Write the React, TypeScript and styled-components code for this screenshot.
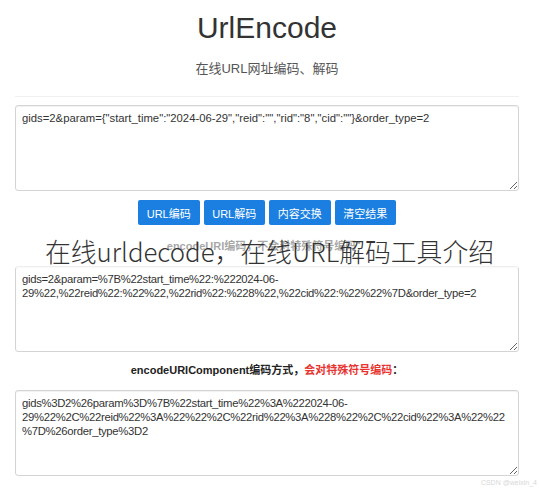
import React from "react";
import styled, { createGlobalStyle } from "styled-components";

const Global = createGlobalStyle`
  html, body { margin: 0; padding: 0; background: #fff; }
  body { font-family: "Liberation Sans", "Noto Sans CJK SC", sans-serif; color: #333; }
`;

const Page = styled.div`
  position: relative;
  width: 539px;
  height: 490px;
  box-sizing: border-box;
  padding: 11px 20px 0 15px;
  display: flex;
  flex-direction: column;
  overflow: hidden;
`;

const Title = styled.h1`
  margin: 0;
  font-size: 30px;
  line-height: 34px;
  font-weight: 400;
  text-align: center;
  color: #333;
`;

const Subtitle = styled.p`
  margin: 15px 0 0;
  font-size: 13px;
  line-height: 18px;
  text-align: center;
  color: #555;
`;

const Rule = styled.hr`
  margin: 18px 0 0;
  border: 0;
  border-top: 1px solid #f0f0f0;
`;

const Area = styled.textarea<{ $top: number; $tight?: boolean }>`
  display: block;
  margin: ${(p) => p.$top}px 0 0;
  width: 100%;
  height: 86px;
  box-sizing: border-box;
  border: 1px solid #d4d4d4;
  border-radius: 3px;
  box-shadow: inset 0 1px 1px rgba(0, 0, 0, 0.06);
  padding: 5px 12px 5px 6px;
  font-family: "Liberation Sans", "Noto Sans CJK SC", sans-serif;
  font-size: 11.3px;
  line-height: 14px;
  letter-spacing: ${(p) => (p.$tight ? "-0.3px" : "0")};
  color: #333;
  resize: vertical;
  outline: none;
  overflow: hidden;
`;

const Buttons = styled.div`
  margin-top: 9px;
  display: flex;
  justify-content: center;
  gap: 4px;
`;

const Btn = styled.button`
  width: 61.5px;
  height: 25px;
  padding: 0;
  border: 0;
  border-radius: 2px;
  background: #1a7fe0;
  color: #fff;
  font-family: "Liberation Sans", "Noto Sans CJK SC", sans-serif;
  font-size: 11px;
`;

const Label = styled.div<{ $top: number; $bottom: number }>`
  margin: ${(p) => p.$top}px 0 ${(p) => p.$bottom}px;
  height: 18px;
  line-height: 18px;
  font-size: 11px;
  font-weight: 700;
  text-align: center;
  color: #222;
`;

const Red = styled.span`
  color: #e8332f;
`;

const Overlay = styled.div`
  position: absolute;
  left: 0;
  right: 0;
  top: 234px;
  height: 34px;
  background: rgba(255, 255, 255, 0.6);
  display: flex;
  align-items: center;
  justify-content: center;
  font-family: "Noto Sans CJK SC", "Noto Sans", sans-serif;
  font-weight: 300;
  font-size: 25.8px;
  line-height: 34px;
  color: #333;
  white-space: nowrap;
`;

const Watermark = styled.div`
  position: absolute;
  right: 2px;
  bottom: 4px;
  font-size: 7px;
  color: #d8d8d8;
`;

const t1 = `gids=2&param={"start_time":"2024-06-29","reid":"","rid":"8","cid":""}&order_type=2`;
const t2 = `gids=2&param=%7B%22start_time%22:%222024-06-29%22,%22reid%22:%22%22,%22rid%22:%228%22,%22cid%22:%22%22%7D&order_type=2`;
const t3 = `gids%3D2%26param%3D%7B%22start_time%22%3A%222024-06-29%22%2C%22reid%22%3A%22%22%2C%22rid%22%3A%228%22%2C%22cid%22%3A%22%22%7D%26order_type%3D2`;

export default function App() {
  return (
    <>
      <Global />
      <Page>
        <Title>UrlEncode</Title>
        <Subtitle>在线URL网址编码、解码</Subtitle>
        <Rule />
        <Area $top={8} defaultValue={t1} />
        <Buttons>
          <Btn>URL编码</Btn>
          <Btn>URL解码</Btn>
          <Btn>内容交换</Btn>
          <Btn>清空结果</Btn>
        </Buttons>
        <Label $top={12} $bottom={11}>
          encodeURI编码，不会对特殊符号编码：
        </Label>
        <Area $top={0} $tight defaultValue={t2} />
        <Label $top={9} $bottom={11}>
          encodeURIComponent编码方式，<Red>会对特殊符号编码</Red>：
        </Label>
        <Area $top={0} $tight defaultValue={t3} />
        <Overlay>在线urldecode，在线URL解码工具介绍</Overlay>
        <Watermark>CSDN @weixin_4</Watermark>
      </Page>
    </>
  );
}
